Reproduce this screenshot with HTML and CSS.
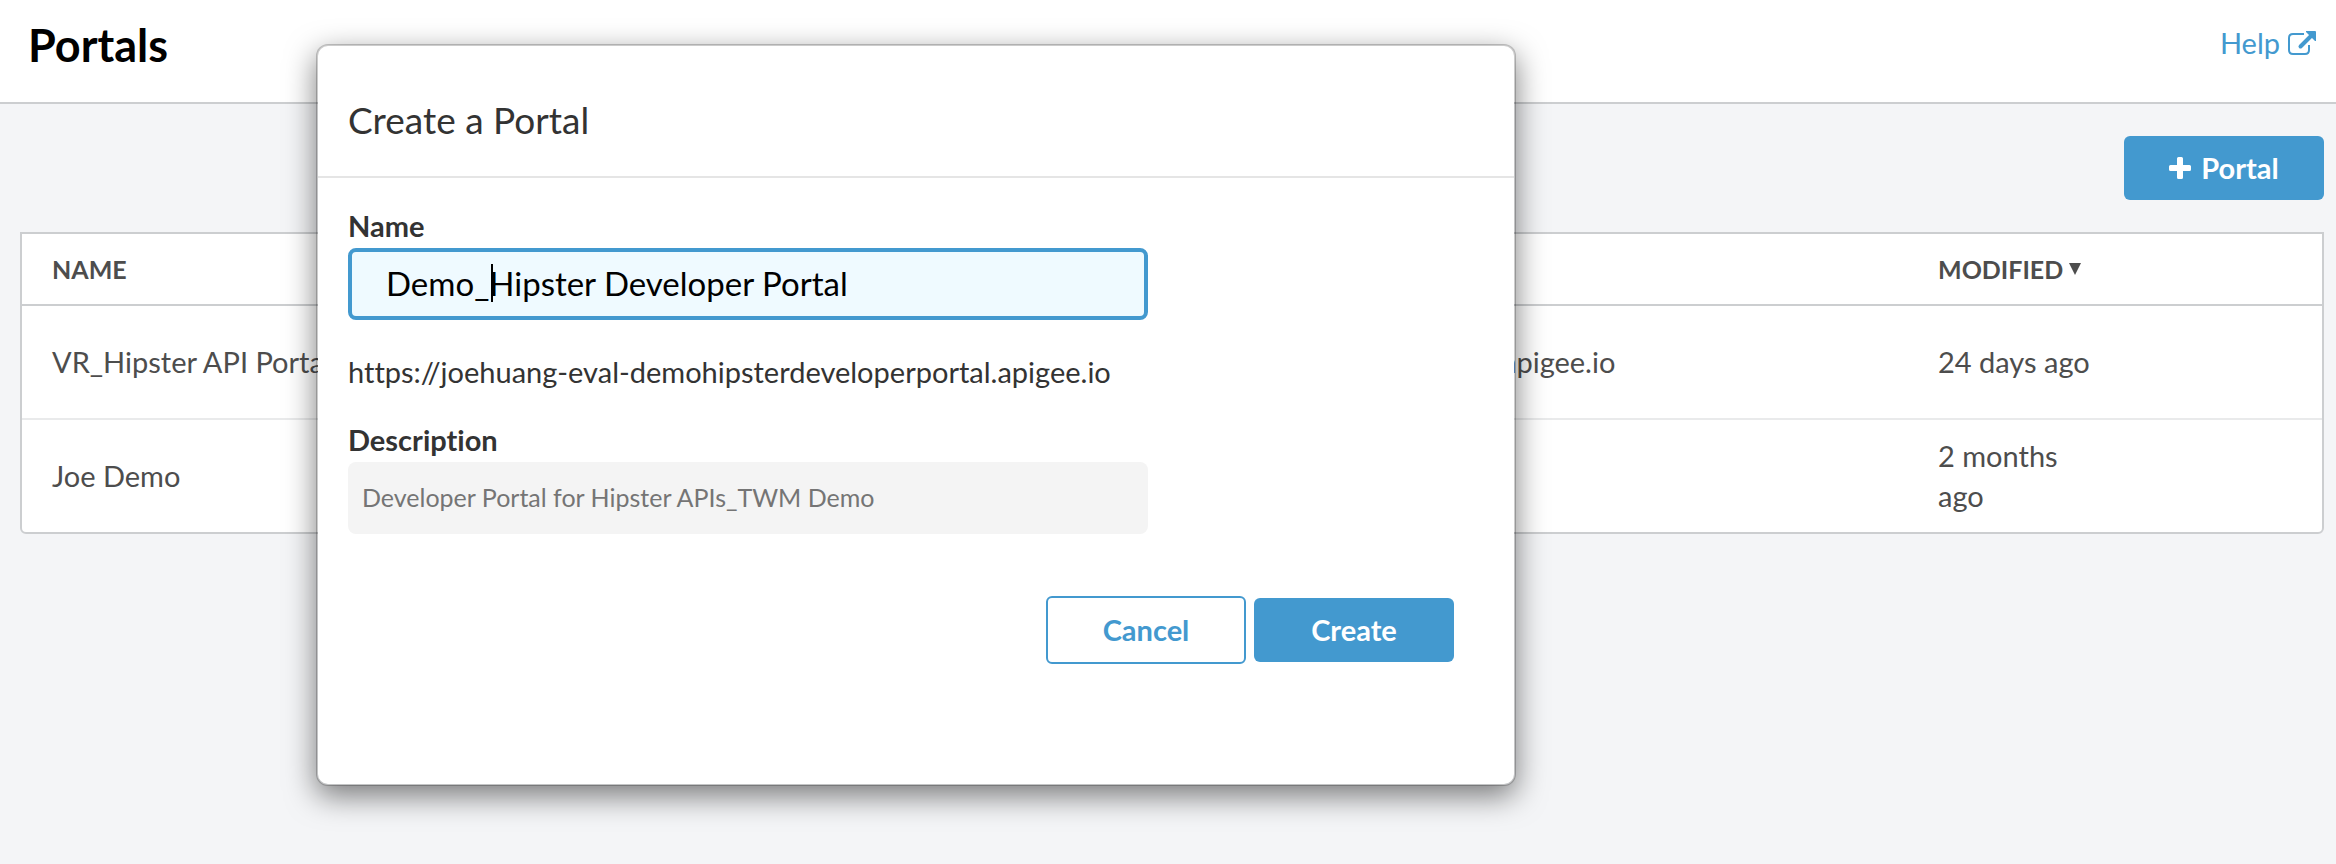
FILE: index.html
```html
<!DOCTYPE html>
<html lang="en">
<head>
<meta charset="utf-8">
<title>Portals</title>
<link rel="stylesheet" href="styles.css">
</head>
<body>
<header class="topbar">
  <h1 class="page-title">Portals</h1>
  <a class="help" href="#help">Help
    <svg class="help-icon" viewBox="0 0 28 24" aria-hidden="true">
      <path d="M16 3H5Q1 3 1 7V19Q1 23 5 23H17Q21 23 21 19V14" fill="none" stroke="currentColor" stroke-width="2"/>
      <path d="M12.5 15.500L23 5" fill="none" stroke="currentColor" stroke-width="4" stroke-linecap="round"/>
      <path d="M18 0H27Q28 0 28 1V10H27L18 1Z" fill="currentColor"/>
    </svg>
  </a>
</header>
<main class="content">
  <div class="actions">
    <button class="btn btn-primary" type="button">
      <svg class="plus-icon" viewBox="0 0 22 22" aria-hidden="true"><path d="M9.500 0h3Q14 0 14 1.500V8h6.500Q22 8 22 9.500v3Q22 14 20.500 14H14v6.500Q14 22 12.500 22h-3Q8 22 8 20.500V14H1.500Q0 14 0 12.500v-3Q0 8 1.500 8H8V1.500Q8 0 9.500 0Z" fill="currentColor"/></svg>
      Portal
    </button>
  </div>
  <div class="table-box">
    <table class="portals">
      <colgroup><col class="col-name"><col class="col-url"><col class="col-modified"></colgroup>
      <thead>
        <tr><th scope="col">NAME</th><th scope="col"></th><th scope="col"><span class="sort">MODIFIED <svg class="sort-icon" viewBox="0 0 12 12" aria-hidden="true"><path d="M0 0h12L6 12Z" fill="currentColor"/></svg></span></th></tr>
      </thead>
      <tbody>
        <tr><td>VR_Hipster API Portal</td><td class="url">apigee.io</td><td><span class="when">24 days ago</span></td></tr>
        <tr><td>Joe Demo</td><td></td><td><span class="when">2 months ago</span></td></tr>
      </tbody>
    </table>
  </div>
</main>
<section class="modal" role="dialog" aria-labelledby="dialog-title">
  <header class="modal-header"><h2 class="modal-title" id="dialog-title">Create a Portal</h2></header>
  <form class="modal-body">
    <label class="label" for="portal-name">Name</label>
    <div class="name-wrap">
      <input class="field field-name" id="portal-name" type="text" value="Demo_Hipster Developer Portal">
      <span class="caret"></span>
    </div>
    <p class="portal-url">https://joehuang-eval-demohipsterdeveloperportal.apigee.io</p>
    <label class="label" for="portal-desc">Description</label>
    <input class="field field-desc" id="portal-desc" type="text" value="Developer Portal for Hipster APIs_TWM Demo">
    <div class="modal-actions">
      <button class="btn btn-outline" type="button">Cancel</button>
      <button class="btn btn-primary" type="button">Create</button>
    </div>
  </form>
</section>
</body>
</html>
```
FILE: styles.css
```css
* { box-sizing: border-box; }

body {
  margin: 0;
  min-height: 100vh;
  position: relative;
  background: #f4f5f7;
  color: #4d4d4d;
  font: 29px/40px Lato, "Open Sans", sans-serif;
  font-variant-ligatures: none;
}

.topbar {
  display: flex;
  justify-content: space-between;
  padding: 14px 20px 26px 28px;
  background: #fff;
  border-bottom: 2px solid #ccced0;
}
.page-title { margin: 0; color: #000; font-size: 45px; line-height: 62px; }
.help {
  display: flex;
  align-items: center;
  gap: 8px;
  height: 58px;
  color: #4399cf;
  text-decoration: none;
}
.help-icon { width: 28px; height: 24px; }

.content { padding: 32px 12px 40px 20px; }
.actions { display: flex; justify-content: flex-end; margin-bottom: 32px; }

.btn {
  display: flex;
  align-items: center;
  justify-content: center;
  gap: 10px;
  width: 200px;
  height: 64px;
  border: 0;
  border-radius: 6px;
  font: bold 29px/40px Lato, "Open Sans", sans-serif;
}
.btn-primary { background: #4399cf; color: #fff; }
.btn-outline { height: 68px; border: 2px solid #4399cf; background: #fff; color: #4399cf; }
.plus-icon { width: 22px; height: 22px; }

.table-box {
  border: 2px solid #ccced0;
  border-radius: 0 0 6px 6px;
  background: #fff;
}
.portals { width: 100%; table-layout: fixed; border-collapse: separate; border-spacing: 0; }
.col-name { width: 32%; }
.col-url { width: 50%; }
.portals th, .portals td { padding: 16px 30px; text-align: left; }
.portals th { height: 72px; padding: 14px 30px; font-size: 25px; border-bottom: 2px solid #ccced0; }
.portals td { height: 114px; border-bottom: 2px solid #e9eaeb; }
.portals tr:last-child td { height: 112px; border-bottom: 0; }
.portals .url { padding-left: 744px; }
.sort { display: flex; align-items: center; gap: 6px; }
.sort-icon { width: 12px; height: 12px; }
.when { display: block; max-width: 160px; }

.modal {
  position: absolute;
  top: 44px;
  left: 316px;
  width: 1200px;
  max-width: calc(100% - 316px);
  border: 2px solid rgba(0, 0, 0, 0.2);
  border-radius: 12px;
  background: #fff;
  background-clip: padding-box;
  box-shadow: 0 10px 30px rgba(0, 0, 0, 0.5);
  color: #333;
}
.modal-header { padding: 54px 30px 36px; border-bottom: 2px solid #e5e5e5; }
.modal-title { margin: 0; font-size: 37px; font-weight: normal; line-height: 40px; }
.modal-body { padding: 28px 60px 120px 30px; }
.label { display: block; margin-bottom: 2px; font-weight: bold; }
.field {
  display: block;
  width: 800px;
  max-width: 100%;
  height: 72px;
  border: 0;
  border-radius: 8px;
  outline: 0;
  font-family: Lato, "Open Sans", sans-serif;
  font-variant-ligatures: none;
}
.name-wrap { position: relative; }
.field-name {
  padding: 0 34px 2px;
  border: 4px solid #4399cf;
  background: #effaff;
  color: #000;
  font-size: 33px;
}
.caret { position: absolute; top: 16px; left: 143px; width: 2px; height: 38px; background: #000; }
.field-desc { padding: 0 14px 2px; background: #f4f4f4; color: #757575; font-size: 25px; }
.portal-url { margin: 32px 0 28px; }
.modal-actions {
  display: flex;
  align-items: center;
  justify-content: flex-end;
  gap: 8px;
  margin-top: 62px;
}
```
